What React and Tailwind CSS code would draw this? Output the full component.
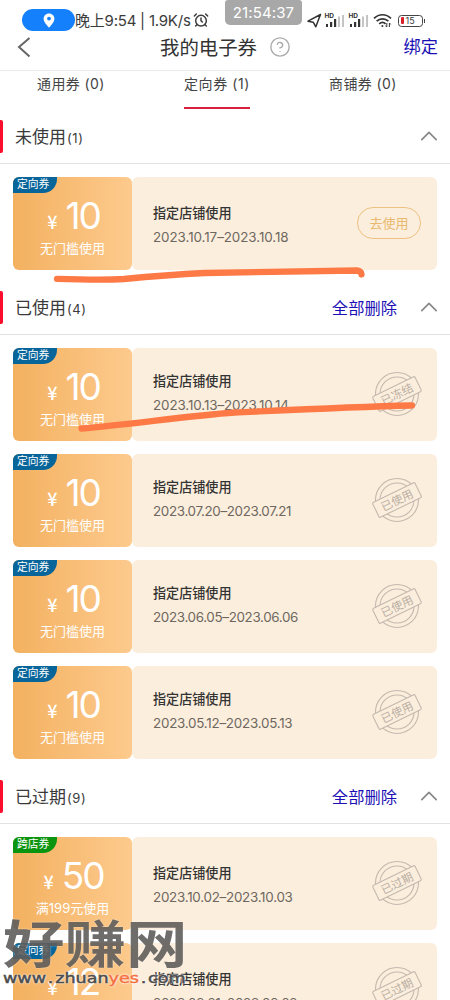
import React from 'react';
import { AlarmClock, ChevronUp, CircleHelp } from 'lucide-react';

const sections = [
  {
    title: '未使用',
    count: 1,
    canDelete: false,
    infoClass: 'pt-[26px]',
    coupons: [
      { tag: '定向券', amount: '10', rule: '无门槛使用', date: '2023.10.17–2023.10.18', dateClass: 'tracking-[-0.06px]', stamp: null },
    ],
  },
  {
    title: '已使用',
    count: 4,
    canDelete: true,
    infoClass: 'pt-[23px]',
    coupons: [
      { tag: '定向券', amount: '10', rule: '无门槛使用', date: '2023.10.13–2023.10.14', dateClass: 'tracking-[-0.1px]', stamp: '已冻结' },
      { tag: '定向券', amount: '10', rule: '无门槛使用', date: '2023.07.20–2023.07.21', dateClass: 'tracking-[-0.34px]', stamp: '已使用' },
      { tag: '定向券', amount: '10', rule: '无门槛使用', date: '2023.06.05–2023.06.06', dateClass: 'tracking-[-0.34px]', stamp: '已使用' },
      { tag: '定向券', amount: '10', rule: '无门槛使用', date: '2023.05.12–2023.05.13', dateClass: 'tracking-[-0.24px]', stamp: '已使用' },
    ],
  },
  {
    title: '已过期',
    count: 9,
    canDelete: true,
    infoClass: 'pt-[26px]',
    coupons: [
      { tag: '跨店券', amount: '50', rule: '满199元使用', date: '2023.10.02–2023.10.03', dateClass: 'tracking-[-0.26px]', stamp: '已过期' },
      { tag: '定向券', amount: '12', rule: '无门槛使用', date: '2023.09.21–2023.09.22', dateClass: 'tracking-[-0.26px]', stamp: '已过期' },
    ],
  },
];

const Signal = () => (
  <div className="relative h-[15px] w-5 shrink-0">
    <svg className="absolute inset-0" width="20" height="15" viewBox="0 0 20 15">
      <rect x="1" y="11" width="2" height="3" fill="#333" />
      <rect x="5" y="9" width="2.2" height="5" fill="#333" />
      <rect x="9" y="6" width="2.2" height="8" fill="#333" />
      <rect x="13" y="3.5" width="2" height="10.5" fill="#c4c4c4" />
      <rect x="17" y="2" width="2" height="12" fill="#c4c4c4" />
    </svg>
    <span className="absolute left-0 top-0 text-[6.5px] leading-[6px] font-bold text-[#333]">HD</span>
  </div>
);

const StatusBar = () => (
  <div className="relative flex h-[35px] items-start pl-[22px] text-[#3b3b3b]">
    <div className="mt-[9px] flex h-[22px] w-[53px] items-center justify-center rounded-full bg-[#1580fb]">
      <svg width="12" height="15" viewBox="0 0 12 15">
        <path
          d="M6 0.5C2.9 0.5 0.6 2.8 0.6 5.7 0.6 9.4 6 14.6 6 14.6S11.4 9.4 11.4 5.7C11.4 2.8 9.1 0.5 6 0.5Z"
          fill="#fff"
        />
        <circle cx="6" cy="5.6" r="1.9" fill="#1580fb" />
      </svg>
    </div>
    <span className="mt-[10px] w-[118px] whitespace-nowrap text-[15px] leading-[22px] tracking-[-0.22px]">
      晚上9:54 | 1.9K/s
    </span>
    <AlarmClock className="mt-[12px]" size={16} strokeWidth={2.2} />
    {/* recorder clock */}
    <div className="absolute left-[225px] top-0 flex h-[25px] w-[77px] items-center justify-center rounded-b-[5px] rounded-t-[3px] bg-[#a8a8a8] pt-[2px] text-[15px] tracking-[0.1px] text-white">
      21:54:37
    </div>
    <div className="ml-auto mr-[25px] mt-[13px] flex h-[15px] items-center">
      <svg width="15" height="15" viewBox="0 0 15 15" className="mr-[3px]">
        <path d="M13.5 1.5 1 8.2 6.2 9.2 8.8 13.8Z" fill="none" stroke="#333" strokeWidth="1.5" strokeLinejoin="round" />
      </svg>
      <Signal />
      <span className="w-[4px]" />
      <Signal />
      <svg width="19" height="15" viewBox="0 0 19 15" className="ml-[4px] mr-[6px]" fill="none" stroke="#333" strokeWidth="1.7">
        <path d="M1 5.4C6 0.5 13 0.5 18 5.4" />
        <path d="M3.6 8.2C7 5 12 5 15.4 8.2" />
        <path d="M6.2 10.8C8.2 9 10.8 9 12.6 10.8" />
        <circle cx="9.4" cy="13" r="1" fill="#333" stroke="none" />
        <path d="M13.8 10v4M12.5 12.6l1.3 1.4M16.4 14v-4M17.7 11.4 16.4 10" strokeWidth="1" />
      </svg>
      <div className="flex h-[12px] w-[25px] items-center rounded-[3.5px] border border-[#444] pl-[2px]">
        <span className="h-[7px] w-[3px] rounded-[1px] bg-[#dc1f26]" />
        <span className="ml-[2px] text-[9px] leading-none">15</span>
      </div>
      <span className="ml-px h-[4px] w-[1.5px] bg-[#444]" />
    </div>
  </div>
);

const Stamp = ({ text }) => (
  <svg width="52" height="46" viewBox="-26 -23 52 46" className="absolute right-[14.5px] top-[23px]">
    <g fill="none" stroke="#c3b9ae" strokeWidth="1.1">
      <circle r="21.5" />
      <circle r="17" />
      <g transform="rotate(-26)">
        <rect x="-23.5" y="-8.3" width="47" height="16.6" rx="1.5" fill="#fceedd" />
      </g>
    </g>
    <text transform="rotate(-26)" textAnchor="middle" y="4.5" fontSize="11.4" fill="#b9aea3">
      {text}
    </text>
  </svg>
);

const Coupon = ({ coupon, infoClass }) => {
  const { tag, amount, rule, date, dateClass, stamp } = coupon;
  return (
    <div className="flex h-[93px] shrink-0">
      <div className="relative w-[119px] overflow-hidden rounded-[6px] bg-gradient-to-r from-[#f3b15f] to-[#fdca8d] text-center text-white">
        <div
          className={`absolute left-0 top-0 flex h-[16px] w-[44px] items-center pl-[4px] pt-px text-[10.8px] rounded-br-[14px] ${
            tag === '跨店券' ? 'bg-[#0b9410]' : 'bg-[#07659a]'
          }`}
        >
          {tag}
        </div>
        <div className="mt-[18px] flex h-[42px] items-baseline justify-center pl-[2px]">
          <span className="mr-[8px] font-['Noto_Sans_CJK_SC'] text-[18px] font-medium">¥</span>
          <span className="text-[37px] leading-[42px] tracking-[-2px]">{amount}</span>
        </div>
        <div className="mt-[2px] text-[13px] leading-[18px]">{rule}</div>
      </div>
      <div className={`relative w-[305px] rounded-[6px] bg-[#fceedd] pl-[21px] ${infoClass}`}>
        <p className="text-[13.1px] leading-[20px] font-medium text-[#333]">指定店铺使用</p>
        <p className={`mt-[4px] text-[13.4px] leading-[21px] text-[#6d6760] ${dateClass}`}>{date}</p>
        {stamp ? (
          <Stamp text={stamp} />
        ) : (
          <button className="absolute right-[16px] top-[30px] h-[32px] w-[64px] rounded-full border border-[#ecc182] pt-px text-[13px] text-[#e9b96f]">
            去使用
          </button>
        )}
      </div>
    </div>
  );
};

const Section = ({ section }) => (
  <section>
    <div className="flex h-[51px] items-start border-b border-[#e2e2e2]">
      <span className="mt-[7px] h-[33px] w-[3px] rounded-r-[2px] bg-[#fb0d2c]" />
      <h2 className="ml-[12px] mt-[12px] text-[17px] leading-[24px] text-[#3a3a3a]">
        {section.title}
        <span className="ml-px text-[13px] tracking-[0.6px]">({section.count})</span>
      </h2>
      {section.canDelete && (
        <span className="ml-auto mr-[20px] mt-[12px] text-[16.3px] leading-[24px] text-[#1a10b4]">全部删除</span>
      )}
      <ChevronUp
        className={`mr-[9px] mt-[11px] text-[#888] ${section.canDelete ? '' : 'ml-auto'}`}
        size={24}
        strokeWidth={1.4}
        viewBox="2 2 20 20"
      />
    </div>
    <div className="flex flex-col gap-[13px] pb-[14px] pl-[13px] pt-[13px]">
      {section.coupons.map((coupon) => (
        <Coupon key={coupon.date} coupon={coupon} infoClass={section.infoClass} />
      ))}
    </div>
  </section>
);

const Watermark = () => (
  <div className="absolute left-[3px] top-[915px] w-[190px]">
    <div className="origin-center scale-y-[0.84] whitespace-nowrap text-[61.5px] leading-[60px] font-bold text-[#605e5c] opacity-90 [text-shadow:0_0_2px_#ffffffb0]">
      好赚网
    </div>
    <div className="-mt-[7px] w-max origin-left scale-x-[1.21] whitespace-nowrap font-['DejaVu_Sans'] text-[14.5px] leading-[20px] text-[#4c4c4c] [-webkit-text-stroke:0.5px_currentColor] [text-shadow:0_0_2px_#fff,0_0_2px_#fff,0_0_1px_#fff]">
      <span>www</span>
      <span className="mx-[1.5px]">.</span>
      <span>zhuan</span>
      <span className="text-[#f4703e]">yes</span>
      <span className="mx-[1.5px]">.</span>
      <span>com</span>
    </div>
  </div>
);

export default function App() {
  return (
    <div className="relative h-[1000px] w-[450px] overflow-hidden bg-white font-['Inter','Noto_Sans_CJK_SC',sans-serif]">
      <StatusBar />
      <header className="relative flex h-[36px] items-start justify-center border-b border-[#ececec]">
        <svg width="14" height="22" viewBox="0 0 14 22" className="absolute left-[17px] top-[1px]">
          <path d="M12.5 2 2 11 12.5 20.5" fill="none" stroke="#666" strokeWidth="2" />
        </svg>
        <h1 className="ml-[1px] mt-px text-[19.4px] leading-[24px] text-[#333]">我的电子券</h1>
        <CircleHelp className="ml-[12px] mt-[1px] text-[#aaa]" size={22} strokeWidth={1.5} />
        <span className="absolute right-[12px] top-0 text-[17.2px] leading-[24px] text-[#1a10b4]">绑定</span>
      </header>
      <nav className="flex h-[42px] text-[14px] leading-[26px] text-[#444]">
        <span className="ml-[37px] w-[147px] tracking-[0.4px]">通用券 (0)</span>
        <span className="h-[38px] w-[66px] whitespace-nowrap border-b-2 border-[#d81e3f] tracking-[0.6px]">定向券 (1)</span>
        <span className="ml-[79px] tracking-[0.4px]">商铺券 (0)</span>
      </nav>
      {sections.map((section) => (
        <Section key={section.title} section={section} />
      ))}

      {/* marker strokes */}
      <svg
        className="absolute left-0 top-0"
        width="450"
        height="1000"
        viewBox="0 0 450 1000"
        fill="none"
        stroke="#fd7a47"
        strokeLinecap="round"
        strokeLinejoin="round"
      >
        <path d="M57 278.8C80 279.5 105 280 124 279C150 276.5 175 274.5 205 273L357 270.5Q361 271 361.5 274.5" strokeWidth="6.3" />
        <path d="M81.5 428.5C130 424.5 190 415.5 235 412.5C290 410 350 407 412 405.5" strokeWidth="6.3" />
      </svg>
      <Watermark />
    </div>
  );
}
